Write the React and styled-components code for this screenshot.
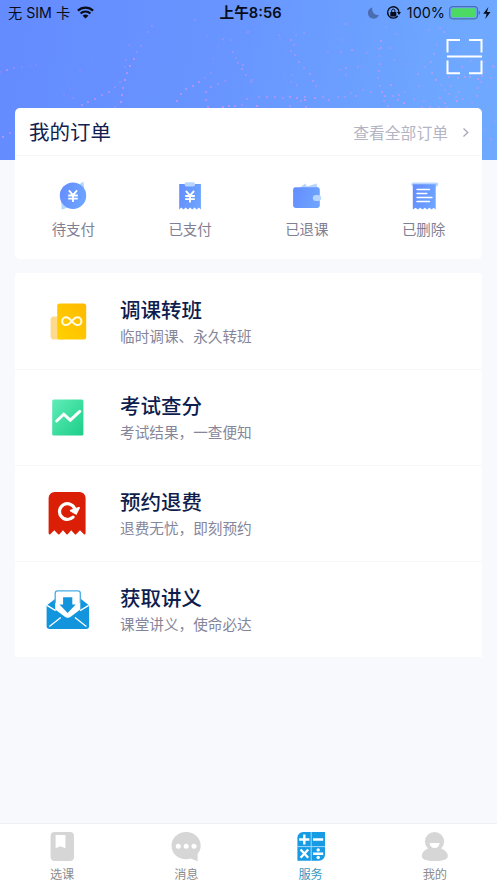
import React from 'react';
import styled, { createGlobalStyle, css } from 'styled-components';

const GlobalStyle = createGlobalStyle`
  * {
    box-sizing: border-box;
  }

  body {
    margin: 0;
    background: #f8f9fd;
    font-family: 'Inter', 'Noto Sans CJK SC', sans-serif;
  }
`;

const Page = styled.div`
  display: flex;
  flex-direction: column;
  width: 497px;
  height: 883px;
  overflow: hidden;
  background: #f8f9fd;
`;

const Hero = styled.header`
  position: relative;
  flex: none;
  height: 160px;
  background: linear-gradient(100deg, #648bff 0%, #6895ff 45%, #6ea8ff 90%);
`;

const Sparkles = styled.svg`
  position: absolute;
  inset: 0;
`;

const StatusBar = styled.div`
  position: relative;
  display: grid;
  grid-template-columns: 1fr auto 1fr;
  align-items: center;
  height: 26px;
  padding: 0 5px 0 8px;
  font-size: 14.2px;
  line-height: 26px;
  color: #080c18;
`;

const StatusGroup = styled.div`
  display: flex;
  align-items: center;
  justify-content: ${({ $end }) => ($end ? 'flex-end' : 'flex-start')};
  white-space: pre;

  svg {
    flex: none;
  }
`;

const Carrier = styled.span`
  margin-right: 7px;
`;

const Time = styled.div`
  padding-left: 1px;
  font-weight: 600;
  font-size: 14.7px;
`;

const Percent = styled.span`
  margin: 0 4px 0 6px;
  font-size: 14.4px;
`;

const ScanRow = styled.div`
  position: relative;
  display: flex;
  justify-content: flex-end;
  padding: 12px 14.5px 0 0;
`;

const Card = styled.section`
  position: relative;
  flex: none;
  margin: 0 15px;
  background: #fff;
  border-radius: 5px;
`;

const OrderCard = styled(Card)`
  height: 151px;
  margin-top: -52px;
`;

const OrderHead = styled.div`
  display: flex;
  align-items: center;
  height: 48px;
  padding: 2px 12px 0 14px;
  border-bottom: 1px solid #f7f7fa;
`;

const OrderTitle = styled.h1`
  flex: 1;
  margin: 0;
  font-size: 20.5px;
  font-weight: 400;
  line-height: 30px;
  color: #12214f;
`;

const AllOrders = styled.a`
  display: flex;
  align-items: center;
  gap: 14px;
  font-size: 15.8px;
  color: #b4b5c4;
`;

const OrderGrid = styled.div`
  display: grid;
  grid-template-columns: repeat(4, 1fr);
  padding-top: 23px;
`;

const OrderItem = styled.div`
  display: flex;
  flex-direction: column;
  align-items: center;
  font-size: 14.5px;
  line-height: 22px;
  color: #7f8093;

  svg {
    margin-bottom: 6px;
  }
`;

const MenuCard = styled(Card)`
  height: 384px;
  margin-top: 14px;
  border-radius: 4px 4px 0 0;
`;

const MenuRow = styled.div`
  display: flex;
  align-items: center;
  height: 96px;

  & + & {
    border-top: 1px solid #f7f7fa;
  }
`;

const MenuIcon = styled.div`
  display: flex;
  justify-content: center;
  width: 105px;
  padding-bottom: 1px;
`;

const MenuInfo = styled.div`
  padding-top: 2px;
`;

const MenuTitle = styled.h2`
  margin: 0;
  font-size: 20.5px;
  font-weight: 500;
  line-height: 30px;
  color: #0f1d4e;
`;

const MenuText = styled.p`
  margin: 0;
  font-size: 14.65px;
  line-height: 23px;
  color: #85869a;
`;

const TabBar = styled.nav`
  display: grid;
  grid-template-columns: repeat(4, 1fr);
  flex: none;
  height: 60px;
  margin-top: auto;
  background: #fff;
  border-top: 1px solid #efeff3;
`;

const Tab = styled.div`
  display: flex;
  flex-direction: column;
  align-items: center;
  padding-top: 6px;
  font-size: 12.2px;
  line-height: 22px;
  color: #8b8b8b;

  svg {
    fill: #d6d6d6;
  }

  ${({ $active }) =>
    $active &&
    css`
      color: #3697c0;

      svg {
        fill: #189be5;
      }
    `}
`;

// x, y, opacity
const dots = [
  [0, 72, 0.4], [7, 70, 0.7], [14, 68, 0.4], [22, 67, 0.25], [30, 66, 0.2], [36, 65, 0.25],
  [65, 75, 0.15], [67, 83, 0.15], [70, 89, 0.2], [64, 95, 0.2], [73, 98, 0.3], [80, 71, 0.25], [92, 61, 0.15],
  [82, 105, 0.7], [88, 102, 0.7], [95, 99, 0.7], [102, 95, 0.6], [109, 92, 0.6], [115, 87, 0.4], [120, 82, 0.4],
  [121, 102, 0.9], [122, 95, 0.8], [123, 88, 0.8], [125, 80, 0.9], [127, 73, 0.7], [130, 66, 0.8], [134, 59, 0.8],
  [137, 52, 0.4], [141, 46, 0.4], [148, 32, 0.3], [152, 26, 0.4], [129, 45, 0.3], [126, 60, 0.3], [125, 67, 0.3], [115, 107, 0.3],
  [177, 101, 0.8], [181, 94, 0.7], [186, 89, 0.7], [193, 86, 0.7], [199, 82, 0.7], [205, 78, 0.4], [211, 73, 0.4],
  [206, 92, 0.7], [206, 100, 0.7], [208, 107, 0.7], [211, 87, 0.6], [218, 84, 0.5], [225, 81, 0.4],
  [213, 63, 0.2], [218, 47, 0.2], [213, 58, 0.2], [223, 39, 0.4], [231, 40, 0.3], [195, 20, 0.4], [207, 36, 0.2], [211, 24, 0.2],
  [223, 107, 0.8], [229, 106, 0.7], [235, 106, 0.6], [242, 105, 0.5], [233, 52, 0.5], [236, 58, 0.4], [238, 63, 0.5],
  [242, 69, 0.6], [243, 65, 0.5], [246, 75, 0.5], [248, 32, 0.5], [251, 82, 0.5], [247, 99, 0.5], [252, 80, 0.4],
  [257, 106, 0.9], [259, 97, 0.5], [267, 97, 0.7], [275, 97, 0.7], [283, 98, 0.6], [290, 97, 0.8], [297, 98, 0.8],
  [305, 100, 0.9], [305, 97, 0.7], [301, 101, 0.5], [315, 98, 0.8], [323, 97, 0.6], [329, 100, 0.7], [338, 97, 0.5],
  [345, 97, 0.5], [351, 93, 0.4], [356, 96, 0.6], [363, 90, 0.3], [371, 92, 0.5], [290, 106, 0.6], [306, 107, 0.7],
  [291, 40, 0.6], [294, 45, 0.5], [291, 51, 0.5], [295, 55, 0.5], [299, 62, 0.6], [304, 68, 0.5], [310, 74, 0.6],
  [313, 81, 0.6], [316, 86, 0.4], [297, 85, 0.5], [296, 35, 0.3], [304, 33, 0.4], [279, 35, 0.3], [280, 38, 0.3],
  [285, 74, 0.2], [292, 75, 0.3], [291, 82, 0.3], [328, 52, 0.3], [341, 52, 0.5], [352, 50, 0.6], [346, 68, 0.6],
  [346, 75, 0.4], [340, 70, 0.3], [358, 67, 0.5], [346, 24, 0.5], [342, 40, 0.3], [367, 53, 0.3], [386, 27, 0.3], [379, 56, 0.4],
  [381, 41, 0.7], [381, 48, 0.6], [379, 49, 0.4], [380, 64, 0.6], [379, 71, 0.6], [378, 78, 0.5], [380, 86, 0.5],
  [382, 92, 0.8], [385, 96, 0.7], [384, 101, 0.5], [388, 106, 0.6], [390, 48, 0.5], [394, 60, 0.3], [391, 85, 0.7],
  [393, 96, 0.6], [398, 100, 0.6], [404, 103, 0.9], [399, 95, 0.6], [405, 92, 0.3], [396, 34, 0.3], [410, 64, 0.3],
  [418, 74, 0.6], [425, 67, 0.5], [431, 62, 0.6], [434, 54, 0.6], [437, 45, 0.4], [432, 73, 0.6], [436, 80, 0.8],
  [441, 85, 0.4], [445, 90, 0.5], [449, 94, 0.6], [451, 86, 0.6], [440, 98, 0.6], [445, 103, 0.6], [457, 101, 0.9],
  [456, 97, 0.5], [459, 92, 0.6], [463, 99, 0.5], [449, 77, 0.7], [447, 72, 0.6], [458, 78, 0.7], [465, 77, 0.7],
  [470, 77, 0.6], [478, 79, 0.9], [482, 76, 0.7], [485, 72, 0.5], [481, 82, 0.6], [478, 88, 0.7], [477, 96, 0.7],
  [472, 103, 0.4], [462, 67, 0.6], [471, 61, 0.5], [484, 62, 0.4], [493, 66, 0.6], [491, 78, 0.5], [488, 85, 0.3],
  [495, 67, 0.4], [444, 32, 0.6], [440, 28, 0.5], [429, 30, 0.3], [419, 86, 0.4], [414, 99, 0.4], [424, 101, 0.5],
  [422, 107, 0.5], [430, 107, 0.6], [439, 107, 0.5], [447, 107, 0.5],
  [3, 137, 0.8], [10, 133, 0.6], [485, 130, 0.3], [491, 139, 0.5], [495, 122, 0.3],
];

const payGradient = (
  <defs>
    <linearGradient id="pay" x1="0" y1="0" x2="1" y2="0.3">
      <stop offset="0" stopColor="#638cff" />
      <stop offset="1" stopColor="#6da3ff" />
    </linearGradient>
  </defs>
);

const Yen = ({ y }) => (
  <path
    d={`M12.9 ${y - 5.4}l4.1 4.8 4.1-4.8M12.2 ${y - 0.2}h9.6M12.2 ${y + 2.9}h9.6M17 ${y - 0.6}v6.8`}
    fill="none"
    stroke="#fff"
    strokeWidth="1.9"
  />
);

const PendingIcon = () => (
  <svg width="34" height="34">
    {payGradient}
    <path d="M27.5 2.5l.8 9-7-5zM5 21.500l.8 9.300 8-3z" fill="#b5d6ff" />
    <circle cx="17" cy="16.7" r="13.2" fill="url(#pay)" />
    <Yen y={16.7} />
  </svg>
);

const PaidIcon = () => (
  <svg width="34" height="34">
    <path
      d="M6.2 5h21.700v25.500l-2-2-2.200 2-2.200-2-2.200 2-2.200-2-2.200 2-2.200-2-2.200 2-2.200-2-2.100 2z"
      fill="url(#pay)"
    />
    <rect x="11.6" y="3.2" width="10.4" height="4.2" rx="1.6" fill="#b7d5ff" />
    <Yen y={17.2} />
  </svg>
);

const RefundIcon = () => (
  <svg width="34" height="34">
    <path d="M9.5 9l5.500-4.500 2 3 9.500-3 1.200 4.500z" fill="#b7d5ff" />
    <rect x="3.1" y="8.3" width="26.7" height="20.6" rx="2.4" fill="url(#pay)" />
    <rect x="22.8" y="16" width="8.4" height="6" rx="3" fill="#b7d5ff" />
  </svg>
);

const DeletedIcon = () => (
  <svg width="34" height="34">
    <rect x="4.4" y="3.4" width="26.8" height="4" rx="1.8" fill="#b7d5ff" />
    <path
      d="M5.8 5.2h22.900v25.300l-2.100-1.800-2 1.800-2.200-1.800-2.300 1.800-2.300-1.800-2.300 1.800-2.300-1.800-2.300 1.800-2.300-1.800-2.800 1.800z"
      fill="url(#pay)"
    />
    <path
      d="M10 10.5h12.500M10 14.500h9.800M10 18.500h15M10 22.500h12.500"
      stroke="#fff"
      strokeWidth="1.4"
      strokeLinecap="round"
    />
  </svg>
);

const TransferIcon = () => (
  <svg width="48" height="48">
    <defs>
      <linearGradient id="gold" x1="0" y1="1" x2="1" y2="0">
        <stop offset="0" stopColor="#ffd100" />
        <stop offset="1" stopColor="#ffb900" />
      </linearGradient>
    </defs>
    <rect x="6.6" y="19.5" width="16" height="23" rx="3" fill="#ffda8d" />
    <rect x="13.2" y="6.6" width="29" height="35.8" rx="2.5" fill="url(#gold)" />
    <path
      d="M27.8 24.2c-2.400-3-3.900-3.900-5.700-3.900a3.900 3.900 0 0 0 0 7.800c1.800 0 3.300-.9 5.700-3.900s3.900-3.900 5.700-3.900a3.900 3.900 0 0 1 0 7.800c-1.800 0-3.300-.9-5.700-3.900z"
      fill="none"
      stroke="#fffbe5"
      strokeWidth="2"
    />
  </svg>
);

const ScoreIcon = () => (
  <svg width="48" height="48">
    <defs>
      <linearGradient id="mint" x1="0" y1="0" x2="1" y2="1">
        <stop offset="0" stopColor="#60edb8" />
        <stop offset="1" stopColor="#1cce88" />
      </linearGradient>
    </defs>
    <rect x="8.2" y="6.6" width="31.2" height="36" rx="1.5" fill="url(#mint)" />
    <path
      d="M12.7 28l7.100-6.800 6.500 6 9.500-8.800"
      fill="none"
      stroke="#fff"
      strokeWidth="3"
      strokeLinecap="round"
    />
  </svg>
);

const BookRefundIcon = () => (
  <svg width="48" height="48">
    <path
      d="M4.6 9a6 6 0 0 1 6-6h25a6 6 0 0 1 6 6v35q0 1.500-1.400 1.500L36 41.300 31.900 45.600h-.8L27.200 41.300 23.500 45.600h-.8L19 41.300 15.200 45.600h-.8L10.300 41.300 6 45.600q-1.400 0-1.400-1.600z"
      fill="#da1f06"
    />
    <path
      d="M29 28.200A7.900 7.900 0 1 1 30.800 19.700"
      fill="none"
      stroke="#fff"
      strokeWidth="3.2"
      strokeLinecap="round"
    />
    <path
      d="M26.8 21.7l5.300 3 2.900-5.900-4 1.200z"
      fill="#fff"
      stroke="#fff"
      strokeWidth="1.8"
      strokeLinejoin="round"
    />
  </svg>
);

const HandoutIcon = () => (
  <svg width="48" height="48">
    <path d="M2.6 20.500L11 14h26l8.100 6.500V41a3 3 0 0 1-3 3H5.600a3 3 0 0 1-3-3z" fill="#1295dc" />
    <path
      d="M11.2 8.200a2.400 2.400 0 0 1 2.400-2.400h20.300a2.400 2.400 0 0 1 2.400 2.400v16.400l-9.300 7a5.500 5.500 0 0 1-6.500 0l-9.300-7z"
      fill="#fff"
    />
    <path
      d="M11.2 18V8.200a2.400 2.400 0 0 1 2.400-2.400h20.300a2.400 2.400 0 0 1 2.400 2.400V18"
      fill="none"
      stroke="#48ade5"
      strokeWidth="1.3"
    />
    <path d="M3 20.400l8.600 5.200M44.700 20.400l-8.600 5.200M5.300 41.400l11.500-9M42.400 41.400l-11.500-9" stroke="#fff" strokeWidth="1.3" />
    <path d="M19.1 12.200h9.200v7.200h3.400l-8.100 8.500-8.100-8.500h3.600z" fill="#1295dc" />
  </svg>
);

const CourseIcon = () => (
  <svg width="34" height="34">
    <rect x="5.6" y="2" width="23.4" height="29" rx="4" />
    <path d="M10.6 5h9.800v13.300l-4.900-2.100-4.900 2.100z" fill="#fff" />
  </svg>
);

const MessageIcon = () => (
  <svg width="34" height="34">
    <path d="M17.1 2C9 2 2.500 8 2.500 15.700S9 29.300 17.100 29.300c2 0 3.400-.3 4.600-.7l6.900 2.600v-7.400c2-2.200 3.100-5 3.100-8.100C31.700 8 25.200 2 17.100 2z" />
    <circle cx="9.3" cy="16.3" r="2.5" fill="#fff" />
    <circle cx="17.2" cy="16.3" r="2.5" fill="#fff" />
    <circle cx="25" cy="16.3" r="2.5" fill="#fff" />
  </svg>
);

const ServiceIcon = () => (
  <svg width="34" height="34">
    <path d="M9 2h22v22.700a6 6 0 0 1-6 6H3.400V7.600A5.600 5.600 0 0 1 9 2z" />
    <path d="M17.2 2v28.700M3.400 16.600H31" stroke="#a5d9f7" strokeWidth="1" />
    <path
      d="M10.3 4.400v10M5.200 9.500h10.200M19 9.500h10.200M6.600 19.500l7.600 8.200M14.200 19.500l-7.600 8.200M19 23.700h10.200"
      stroke="#fff"
      strokeWidth="2.4"
    />
    <circle cx="24.2" cy="19.9" r="1.7" fill="#fff" />
    <circle cx="24.2" cy="27.5" r="1.7" fill="#fff" />
  </svg>
);

const MineIcon = () => (
  <svg width="34" height="34">
    <circle cx="16.5" cy="11.6" r="9.6" />
    <path d="M10.5 18.200C6.500 19.800 3.800 22.500 3.800 26c0 3.500 4 5 13 5s13-1.500 13-5c0-3.500-2.700-6.200-7.300-7.800z" />
    <path d="M11.6 13h10c-.3 3.300-2.200 5.200-5 5.200s-4.700-1.900-5-5.200z" fill="#fff" />
  </svg>
);

const WifiIcon = () => (
  <svg width="17" height="14">
    <path d="M.9 4.600a11 11 0 0 1 15.200 0M3.600 7.500a7 7 0 0 1 9.800 0" fill="none" stroke="#080c18" strokeWidth="2.2" />
    <path d="M5.600 9.700a4 4 0 0 1 5.800 0L8.500 12.600z" fill="#080c18" />
  </svg>
);

const StatusIcons = () => (
  <svg width="34" height="16">
    <path d="M5.400 2.400c-1 4.200 1.600 7.600 6.500 7.700A5.700 5.700 0 1 1 5.400 2.400z" fill="#4a6cb0" />
    <path d="M30.800 11A5.700 5.700 0 1 1 32 7" fill="none" stroke="#080c18" strokeWidth="1.3" />
    <path d="M29.900 7H34l-2 2.900z" fill="#080c18" />
    <rect x="23.300" y="6.900" width="6" height="4.500" rx=".6" fill="#080c18" />
    <path d="M24.700 7V5.700a1.600 1.600 0 0 1 3.200 0V7" fill="none" stroke="#080c18" strokeWidth="1" />
  </svg>
);

const BatteryIcon = () => (
  <svg width="43" height="16">
    <rect x=".7" y="1.6" width="27.8" height="12.2" rx="3.2" fill="none" stroke="#4c6eae" strokeWidth="1.2" />
    <rect x="2.3" y="3.2" width="24.600" height="9" rx="1.8" fill="#4cd964" />
    <path d="M29.700 5.700v4q1.500-.6 1.500-2t-1.500-2z" fill="#4c6eae" />
    <path d="M39.400 2l-5.200 6.700h3.400l-1.300 5.300 5.200-7H38z" fill="#080c18" />
  </svg>
);

const ScanIcon = () => (
  <svg width="37" height="38">
    <path
      d="M1.5 14.500V2h12.500M23 2h12.500v12.500M1.500 22.500V35.300h12.500M23 35.300h12.500V22.500M1 18.600h35"
      fill="none"
      stroke="#fff"
      strokeWidth="2"
    />
  </svg>
);

const ArrowIcon = () => (
  <svg width="8" height="10">
    <path d="M1.500 .5l4.300 4-4.300 4" fill="none" stroke="#a3a4b5" strokeWidth="1.2" />
  </svg>
);

const orders = [
  { label: '待支付', icon: <PendingIcon /> },
  { label: '已支付', icon: <PaidIcon /> },
  { label: '已退课', icon: <RefundIcon /> },
  { label: '已删除', icon: <DeletedIcon /> },
];

const services = [
  { title: '调课转班', text: '临时调课、永久转班', icon: <TransferIcon /> },
  { title: '考试查分', text: '考试结果，一查便知', icon: <ScoreIcon /> },
  { title: '预约退费', text: '退费无忧，即刻预约', icon: <BookRefundIcon /> },
  { title: '获取讲义', text: '课堂讲义，使命必达', icon: <HandoutIcon /> },
];

const tabs = [
  { label: '选课', icon: <CourseIcon /> },
  { label: '消息', icon: <MessageIcon /> },
  { label: '服务', icon: <ServiceIcon />, active: true },
  { label: '我的', icon: <MineIcon /> },
];

const App = () => {
  return (
    <Page>
      <GlobalStyle />
      <Hero>
        <Sparkles width="497" height="160">
          {dots.map(([x, y, o], i) => (
            <circle key={i} cx={x} cy={y} r="1.1" fill="#d994f2" opacity={o} />
          ))}
        </Sparkles>
        <StatusBar>
          <StatusGroup>
            <Carrier>无 SIM 卡</Carrier>
            <WifiIcon />
          </StatusGroup>
          <Time>上午8:56</Time>
          <StatusGroup $end>
            <StatusIcons />
            <Percent>100%</Percent>
            <BatteryIcon />
          </StatusGroup>
        </StatusBar>
        <ScanRow>
          <ScanIcon />
        </ScanRow>
      </Hero>

      <OrderCard>
        <OrderHead>
          <OrderTitle>我的订单</OrderTitle>
          <AllOrders>
            查看全部订单
            <ArrowIcon />
          </AllOrders>
        </OrderHead>
        <OrderGrid>
          {orders.map(({ label, icon }) => (
            <OrderItem key={label}>
              {icon}
              {label}
            </OrderItem>
          ))}
        </OrderGrid>
      </OrderCard>

      <MenuCard>
        {services.map(({ title, text, icon }) => (
          <MenuRow key={title}>
            <MenuIcon>{icon}</MenuIcon>
            <MenuInfo>
              <MenuTitle>{title}</MenuTitle>
              <MenuText>{text}</MenuText>
            </MenuInfo>
          </MenuRow>
        ))}
      </MenuCard>

      <TabBar>
        {tabs.map(({ label, icon, active }) => (
          <Tab key={label} $active={active}>
            {icon}
            {label}
          </Tab>
        ))}
      </TabBar>
    </Page>
  );
};

export default App;
